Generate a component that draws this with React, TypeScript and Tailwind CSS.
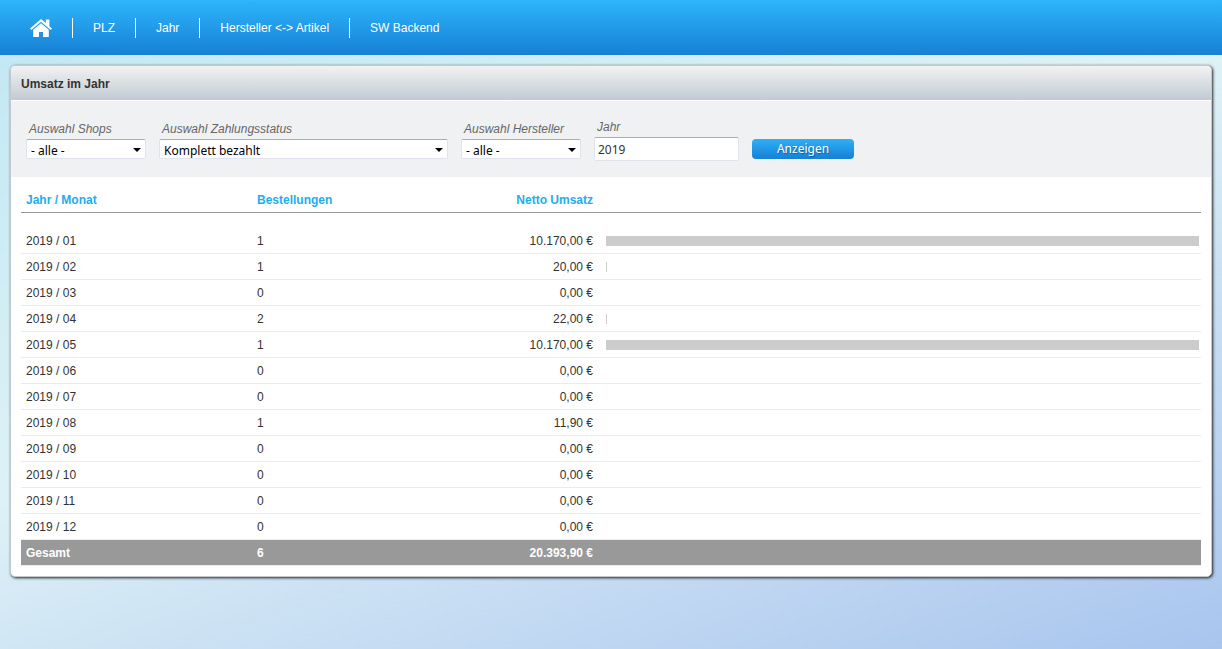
import { useState } from "react";

const selectArrow = "pointer-events-none absolute right-[5px] top-[9px] h-1 w-2";

const navLinks = [
  { label: "PLZ", href: "#plz" },
  { label: "Jahr", href: "#jahr" },
  { label: "Hersteller <-> Artikel", href: "#hersteller" },
  { label: "SW Backend", href: "#backend" },
];

const months = [
  { month: "01", orders: 1, revenue: 10170 },
  { month: "02", orders: 1, revenue: 20 },
  { month: "03", orders: 0, revenue: 0 },
  { month: "04", orders: 2, revenue: 22 },
  { month: "05", orders: 1, revenue: 10170 },
  { month: "06", orders: 0, revenue: 0 },
  { month: "07", orders: 0, revenue: 0 },
  { month: "08", orders: 1, revenue: 11.9 },
  { month: "09", orders: 0, revenue: 0 },
  { month: "10", orders: 0, revenue: 0 },
  { month: "11", orders: 0, revenue: 0 },
  { month: "12", orders: 0, revenue: 0 },
];

const maxRevenue = Math.max(...months.map((m) => m.revenue));
const totalOrders = months.reduce((sum, m) => sum + m.orders, 0);
const totalRevenue = months.reduce((sum, m) => sum + m.revenue, 0);

function formatEuro(value: number) {
  const [whole, cents] = value.toFixed(2).split(".");
  return `${whole.replace(/\B(?=(\d{3})+$)/g, ".")},${cents} €`;
}

function barWidth(revenue: number) {
  const share = (revenue / maxRevenue) * 100;
  return share < 0.15 ? "0%" : `${share}%`;
}

function HomeIcon() {
  return (
    <svg viewBox="0 0 22 19" className="block h-[19px] w-[22px]" fill="#fff" aria-hidden="true">
      <path d="M11 0 0 9.4l1.3 1.6L11 2.8l9.7 8.2L22 9.4l-2.6-2.2V0.6h-3.6v3.5z" />
      <path d="M11 4.2 3.2 10.8V18H9v-5h4v5h5.8v-7.2z" />
    </svg>
  );
}

function SelectField({
  id,
  label,
  options,
  width,
}: {
  id: string;
  label: string;
  options: string[];
  width: string;
}) {
  return (
    <div className={width}>
      <label htmlFor={id} className="block pl-[3px] text-[12px] leading-5 italic text-[#666]">
        {label}
      </label>
      <div className="relative">
        <select
          id={id}
          className="block h-5 w-full appearance-none rounded-[2px] border border-[#dfe4ec] border-t-[#abadb3] bg-white pt-0.5 pr-4 pl-1 font-['Noto_Sans','Open_Sans',sans-serif] text-[12px] leading-[18px] text-black"
        >
          {options.map((o) => (
            <option key={o}>{o}</option>
          ))}
        </select>
        <svg viewBox="0 0 8 4" className={selectArrow} aria-hidden="true">
          <path d="M0 0h8L4 4z" />
        </svg>
      </div>
    </div>
  );
}

export default function App() {
  const [year, setYear] = useState("2019");

  return (
    <div className="min-h-screen bg-[linear-gradient(160deg,#c0e7f3_0%,#ddf2f6_46%,#c8def3_69%,#a9c5ee_100%)] font-['Liberation_Sans',Arial,sans-serif] text-[12px] text-[#333]">
      {/* NAVIGATION */}
      <nav className="flex h-[55px] items-center bg-linear-to-b from-[#2eb5fb] to-[#1780d5] pl-[30px] text-white">
        <a href="#home" aria-label="Startseite" className="pt-0.5 pr-5">
          <HomeIcon />
        </a>
        {navLinks.map((link) => (
          <a key={link.href} href={link.href} className="border-l border-white px-5 leading-5">
            {link.label}
          </a>
        ))}
      </nav>

      {/* PANEL */}
      <main className="mx-[10px] mt-[10px] overflow-hidden rounded-[5px] border border-[#c4c8ca] bg-white pb-[10px] shadow-[1px_1px_3px_#222]">
        <h1 className="border-b border-white bg-linear-to-b from-[#f2f2f2] to-[#c1cbd3] px-[10px] pt-0.5 text-[12px] leading-8 font-bold">
          Umsatz im Jahr
        </h1>

        {/* FILTER */}
        <form
          onSubmit={(e) => e.preventDefault()}
          className="flex items-center gap-[13px] bg-[#f0f1f3] px-[15px] py-4"
        >
          <SelectField id="shops" label="Auswahl Shops" options={["- alle -"]} width="w-[120px]" />
          <SelectField
            id="status"
            label="Auswahl Zahlungsstatus"
            options={["Komplett bezahlt"]}
            width="w-[289px]"
          />
          <SelectField id="hersteller" label="Auswahl Hersteller" options={["- alle -"]} width="w-[120px]" />
          <div className="w-[145px]">
            <label htmlFor="jahr" className="block pl-[3px] text-[12px] leading-5 italic text-[#666]">
              Jahr
            </label>
            <input
              id="jahr"
              type="text"
              value={year}
              onChange={(e) => setYear(e.target.value)}
              className="block h-6 w-full rounded-[2px] border border-[#dfe4ec] border-t-[#abadb3] bg-white px-[3px] font-['Noto_Sans','Open_Sans',sans-serif] text-[12px]"
            />
          </div>
          <button
            type="submit"
            className="mb-0.5 h-5 w-[102px] self-end rounded-[4px] bg-linear-to-b from-[#2eb0f8] to-[#1780d5] font-['Noto_Sans','Open_Sans',sans-serif] text-[12px] leading-5 text-white text-shadow-[1px_1px_1px_#0005]"
          >
            Anzeigen
          </button>
        </form>

        {/* REVENUE TABLE */}
        <div className="px-[10px]">
          <table className="w-full table-fixed border-collapse">
            <colgroup>
              <col className="w-[231px]" />
              <col className="w-[231px]" />
              <col className="w-[115px]" />
              <col />
            </colgroup>
            <thead className="text-[#1caeef]">
              <tr className="h-[35px] border-b border-[#999] text-left">
                <th className="px-[5px] pt-3">Jahr / Monat</th>
                <th className="px-[5px] pt-3">Bestellungen</th>
                <th className="px-[5px] pt-3 text-right">Netto Umsatz</th>
                <td />
              </tr>
            </thead>
            <tbody>
              <tr className="h-[15px]">
                <td colSpan={4} />
              </tr>
              {months.map((m) => (
                <tr key={m.month} className="h-[26px] border-b border-[#ebebeb]">
                  <td className="px-[5px] pt-0.5">2019 / {m.month}</td>
                  <td className="px-[5px] pt-0.5">{m.orders}</td>
                  <td className="px-[5px] pt-0.5 text-right">{formatEuro(m.revenue)}</td>
                  <td className="pt-0.5 pr-[2px] pl-2">
                    <div className="h-[10px] bg-[#ccc]" style={{ width: barWidth(m.revenue) }} />
                  </td>
                </tr>
              ))}
            </tbody>
            <tfoot>
              <tr className="h-[26px] border-b border-[#ebebeb] bg-[#999] font-bold text-white">
                <td className="px-[5px] pt-0.5">Gesamt</td>
                <td className="px-[5px] pt-0.5">{totalOrders}</td>
                <td className="px-[5px] pt-0.5 text-right">{formatEuro(totalRevenue)}</td>
                <td />
              </tr>
            </tfoot>
          </table>
        </div>
      </main>
    </div>
  );
}
